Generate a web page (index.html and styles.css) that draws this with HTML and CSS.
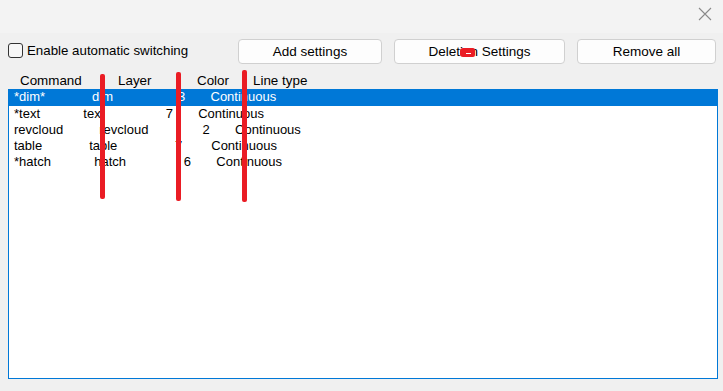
FILE: index.html
```html
<!DOCTYPE html>
<html lang="en">
<head>
    <meta charset="UTF-8">
    <title>Layer settings</title>
    <link rel="stylesheet" href="styles.css">
</head>
<body>
    <div class="window">
        <div class="titlebar">
            <svg class="close" width="14" height="14" viewBox="0 0 14 14">
                <path d="M1 1 L13 13 M13 1 L1 13" stroke="#8a8a8a" stroke-width="1.1" fill="none"/>
            </svg>
        </div>

        <div class="toolbar">
            <label class="check">
                <span class="box"></span>
                <span class="check-text">Enable automatic switching</span>
            </label>
            <div class="buttons">
                <button class="btn btn-add">Add settings</button>
                <button class="btn btn-delete">Deletion Settings</button>
                <button class="btn btn-remove">Remove all</button>
            </div>
        </div>

        <div class="header">
            <span class="col-cmd">Command</span>
            <span class="col-layer">Layer</span>
            <span class="col-color">Color</span>
            <span class="col-type">Line type</span>
        </div>

        <div class="list">
            <div class="row selected">*dim*             dim                  3       Continuous</div>
            <div class="row">*text            text                 7       Continuous</div>
            <div class="row">revcloud          revcloud               2       Continuous</div>
            <div class="row">table             table                7        Continuous</div>
            <div class="row">*hatch            hatch                6       Continuous</div>
        </div>
    </div>

    <!-- red marks drawn over the screenshot -->
    <div class="mark mark-1"></div>
    <div class="mark mark-2"></div>
    <div class="mark mark-3"></div>
    <div class="blot"><span></span></div>
</body>
</html>
```

FILE: styles.css
```css
body {
    margin: 0;
    width: 723px;
    height: 391px;
    background-color: #f0f0f0;
    font-family: "Liberation Sans", Arial, sans-serif;
    font-size: 13px;
    color: #000;
    position: relative;
    overflow: hidden;
}
.titlebar {
    height: 33px;
    background-color: #f3f3f3;
    display: flex;
    justify-content: flex-end;
    align-items: flex-start;
}
.close {
    margin: 7px 11px 0 0;
}
.toolbar {
    display: flex;
    align-items: center;
    height: 25px;
    margin-top: 6px;
    padding: 0 7px 0 8px;
}
.check {
    display: flex;
    align-items: center;
    gap: 4px;
    margin-top: -3px;
}
.check-text {
    font-size: 13.3px;
}
.box {
    width: 13px;
    height: 13px;
    border: 1px solid #333;
    border-radius: 3px;
    background-color: #f7f7f7;
}
.buttons {
    display: flex;
    gap: 12px;
    margin-left: auto;
}
.btn {
    height: 25px;
    background-color: #fdfdfd;
    border: 1px solid #d0d0d0;
    border-radius: 4px;
    font-family: "Liberation Sans", Arial, sans-serif;
    font-size: 13.5px;
    color: #000;
    padding: 0;
}
.btn-add {
    width: 144px;
}
.btn-delete {
    width: 171px;
}
.btn-remove {
    width: 139px;
}
.header {
    display: flex;
    height: 16px;
    line-height: 16px;
    margin-top: 9px;
    padding-left: 20px;
    font-size: 13.4px;
}
.col-cmd {
    width: 98px;
}
.col-layer {
    width: 79px;
}
.col-color {
    width: 56px;
}
.list {
    margin-left: 8px;
    width: 708px;
    height: 288px;
    background-color: #fff;
    border: 1px solid #0078d7;
}
.row {
    height: 16px;
    line-height: 16px;
    padding-left: 5px;
    white-space: pre;
}
.row.selected {
    background-color: #0078d7;
    color: #fff;
    margin-top: -1px;
    padding-bottom: 1px;
}
.mark {
    position: absolute;
    width: 5px;
    background-color: #ea1c24;
    border-radius: 2px;
}
.mark-1 {
    left: 100px;
    top: 74px;
    height: 125px;
}
.mark-2 {
    left: 176px;
    top: 72px;
    height: 129px;
}
.mark-3 {
    left: 242px;
    top: 70px;
    height: 132px;
}
.blot {
    position: absolute;
    left: 460px;
    top: 48px;
    width: 15px;
    height: 9px;
    background-color: #ea1c24;
    border-radius: 3px 2px 2px 3px;
}
.blot span {
    position: absolute;
    left: 6px;
    top: 5px;
    width: 5px;
    height: 1px;
    background-color: #fff;
}
```
